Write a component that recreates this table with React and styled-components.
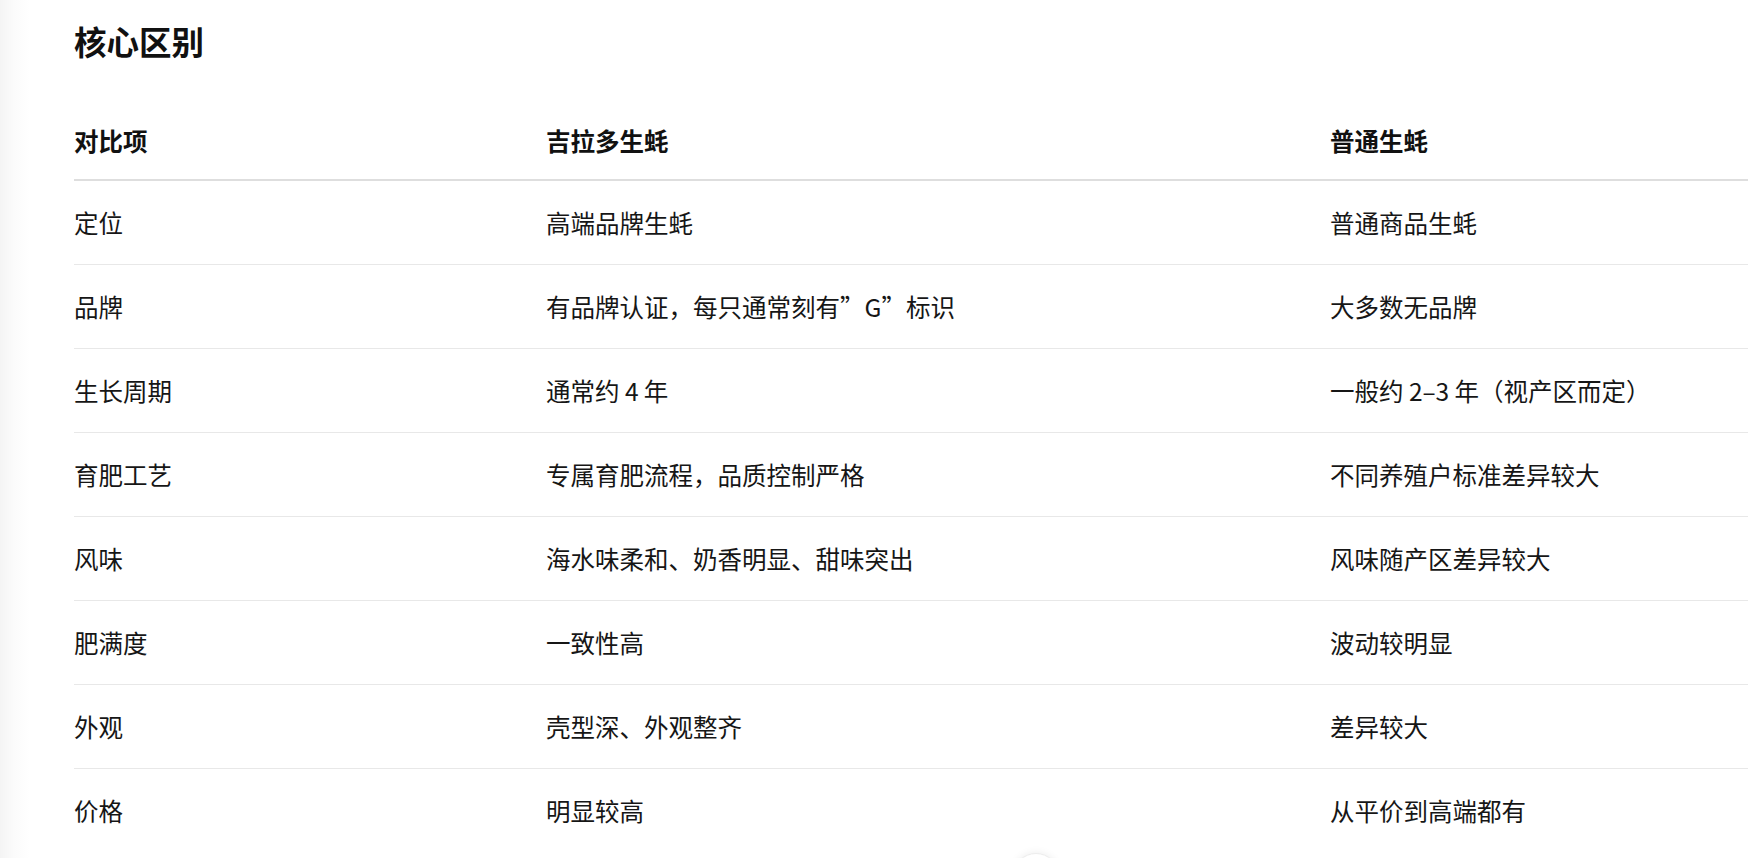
import styled, { createGlobalStyle } from 'styled-components';

const GlobalStyle = createGlobalStyle`
    html, body {
        margin: 0;
        padding: 0;
        height: 100%;
        overflow: hidden;
    }

    body {
        background: linear-gradient(to right, #f4f4f4 0px, #fbfbfb 14px, #ffffff 30px);
        font-family: 'Noto Sans CJK SC', 'Noto Sans', sans-serif;
        color: #1a1a1a;
        text-autospace: no-autospace;
    }
`;

const Page = styled.main`

    padding: 18px 0 0 74px;

`;

const Title = styled.h2`

    margin: 0;
    height: 45px;
    line-height: 45px;
    font-size: 32.5px;
    font-weight: 700;
    color: #111111;

`;

const Table = styled.table`

    margin-top: 33px;
    width: 100%;
    table-layout: fixed;
    border-collapse: separate;
    border-spacing: 0;

`;

const HeadCell = styled.th`

    padding: 27px 0 21px 0;
    line-height: 35px;
    text-align: left;
    font-size: 24.5px;
    font-weight: 700;
    color: #111111;
    border-bottom: 2px solid #dedede;
    white-space: nowrap;

`;

const Row = styled.tr`

    &:last-child td {
        border-bottom: none;
    }

`;

const Cell = styled.td`

    padding: 24px 0;
    line-height: 35px;
    font-size: 24.5px;
    font-weight: 400;
    color: #161616;
    border-bottom: 1px solid #e8e8e8;
    white-space: nowrap;

`;

const Num = styled.span`

    margin: 0 0.22em;

`;

const ScrollButton = styled.button`

    position: fixed;
    left: 1013px;
    top: 853px;
    width: 46px;
    height: 46px;
    padding: 0;
    border-radius: 50%;
    border: 1px solid #ececec;
    background: #ffffff;
    box-shadow: 0 0 8px rgba(0, 0, 0, 0.08);

`;

function getRows () {
    return [
        { item: '定位', gillardeau: '高端品牌生蚝', common: '普通商品生蚝' },
        { item: '品牌', gillardeau: '有品牌认证，每只通常刻有”G”标识', common: '大多数无品牌' },
        {
            item: '生长周期',
            gillardeau: <>通常约<Num>4</Num>年</>,
            common: <>一般约<Num>2–3</Num>年（视产区而定）</>
        },
        { item: '育肥工艺', gillardeau: '专属育肥流程，品质控制严格', common: '不同养殖户标准差异较大' },
        { item: '风味', gillardeau: '海水味柔和、奶香明显、甜味突出', common: '风味随产区差异较大' },
        { item: '肥满度', gillardeau: '一致性高', common: '波动较明显' },
        { item: '外观', gillardeau: '壳型深、外观整齐', common: '差异较大' },
        { item: '价格', gillardeau: '明显较高', common: '从平价到高端都有' }
    ];
}

export default function App () {

    const rows = getRows();

    return (
        <>
            <GlobalStyle />
            <Page>
                <Title>核心区别</Title>
                <Table>
                    <colgroup>
                        <col style={{ width: 472 }} />
                        <col style={{ width: 784 }} />
                        <col />
                    </colgroup>
                    <thead>
                        <tr>
                            <HeadCell>对比项</HeadCell>
                            <HeadCell>吉拉多生蚝</HeadCell>
                            <HeadCell>普通生蚝</HeadCell>
                        </tr>
                    </thead>
                    <tbody>
                        {rows.map(row => (
                            <Row key={row.item}>
                                <Cell>{row.item}</Cell>
                                <Cell>{row.gillardeau}</Cell>
                                <Cell>{row.common}</Cell>
                            </Row>
                        ))}
                    </tbody>
                </Table>
            </Page>
            <ScrollButton aria-label="scroll down" />
        </>
    );

}
